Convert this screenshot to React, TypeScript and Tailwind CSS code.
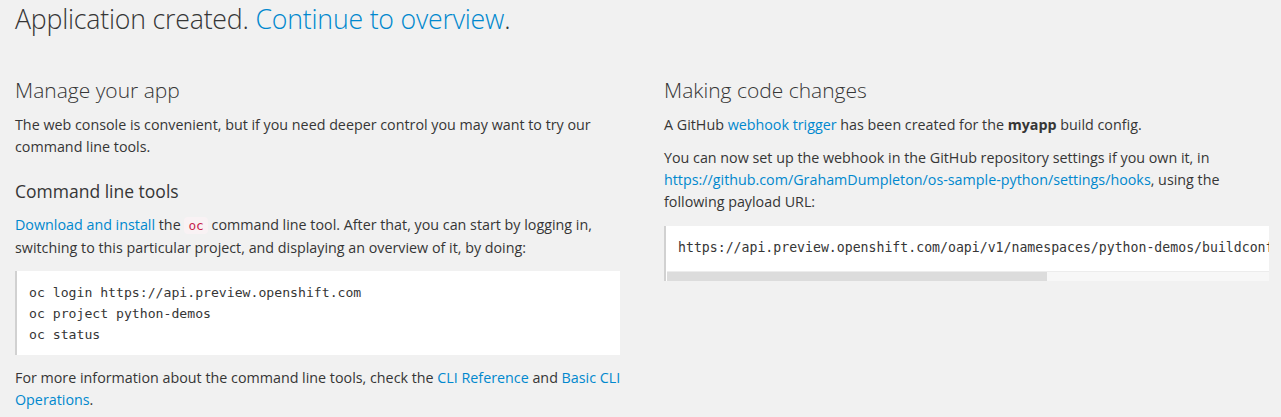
import React from 'react';

const link = 'text-[#0088ce]';

// Code block with a grey left rule on white
const CodeBlock: React.FC<{ lines: string[] }> = ({ lines }) => (
  <pre className="bg-white border-l-2 border-[#d1d1d1] px-[12px] py-[10.5px] font-['DejaVu_Sans_Mono',monospace] text-[13.15px] leading-[21px] text-[#363636]">
    {lines.join('\n')}
  </pre>
);

// Scrolling code box, clipped with a fake horizontal scrollbar
const ScrollCode: React.FC<{ text: string }> = ({ text }) => (
  <div className="bg-white border-l-2 border-[#d1d1d1]">
    <div className="overflow-hidden whitespace-nowrap pl-[12px] pt-[10.5px] pb-[13.5px] font-['DejaVu_Sans_Mono',monospace] text-[13.2px] leading-[21px] text-[#363636]">
      {text}
    </div>
    <div className="h-[10px] bg-[#f7f7f7] border-t border-[#ececec] ml-[1px]">
      <div className="h-full w-[380px] bg-[#dcdcdc]" />
    </div>
  </div>
);

export default function App() {
  return (
    <div className="min-h-screen bg-[#f1f1f1] text-[#363636] font-['Open_Sans',sans-serif] px-[15px] pb-8">
      <h1 className="text-[26.7px] font-light leading-[30px] pt-[4px] tracking-[-0.2px]">
        Application created. <a className={link}>Continue to overview</a>.
      </h1>

      <div className="grid grid-cols-[605px_605px] gap-x-[44px] mt-[44px]">
        {/* Left column */}
        <div className="text-[14.3px] leading-[22px]">
          <h2 className="text-[21px] font-light leading-[24px]">Manage your app</h2>
          <p className="mt-[12px]">
            The web console is convenient, but if you need deeper control you may want to try our command line tools.
          </p>
          <h3 className="text-[17.5px] leading-[20px] mt-[23px]">Command line tools</h3>
          <p className="mt-[13px]">
            <a className={link}>Download and install</a> the{' '}
            <code className="bg-[#f9f2f4] text-[#c7254e] px-[4px] py-[1px] rounded-sm font-['DejaVu_Sans_Mono',monospace] text-[12.8px]">oc</code>{' '}
            command line tool. After that, you can start by logging in, switching to this particular project, and
            displaying an overview of it, by doing:
          </p>
          <div className="mt-[12px]">
            <CodeBlock
              lines={['oc login https://api.preview.openshift.com', 'oc project python-demos', 'oc status']}
            />
          </div>
          <p className="mt-[12px] w-[612px]">
            For more information about the command line tools, check the <a className={link}>CLI Reference</a> and{' '}
            <a className={link}>Basic CLI Operations</a>.
          </p>
        </div>

        {/* Right column */}
        <div className="text-[14.3px] leading-[22px]">
          <h2 className="text-[21px] font-light leading-[24px]">Making code changes</h2>
          <p className="mt-[12px]">
            A GitHub <a className={link}>webhook trigger</a> has been created for the <b className="font-bold">myapp</b> build
            config.
          </p>
          <p className="mt-[11px]">
            You can now set up the webhook in the GitHub repository settings if you own it, in{' '}
            <a className={link}>https://github.com/GrahamDumpleton/os-sample-python/settings/hooks</a>, using the following
            payload URL:
          </p>
          <div className="mt-[13px]">
            <ScrollCode text="https://api.preview.openshift.com/oapi/v1/namespaces/python-demos/buildconfigs/myapp/webhooks/5a2b9c1e4d/github" />
          </div>
        </div>
      </div>
    </div>
  );
}
